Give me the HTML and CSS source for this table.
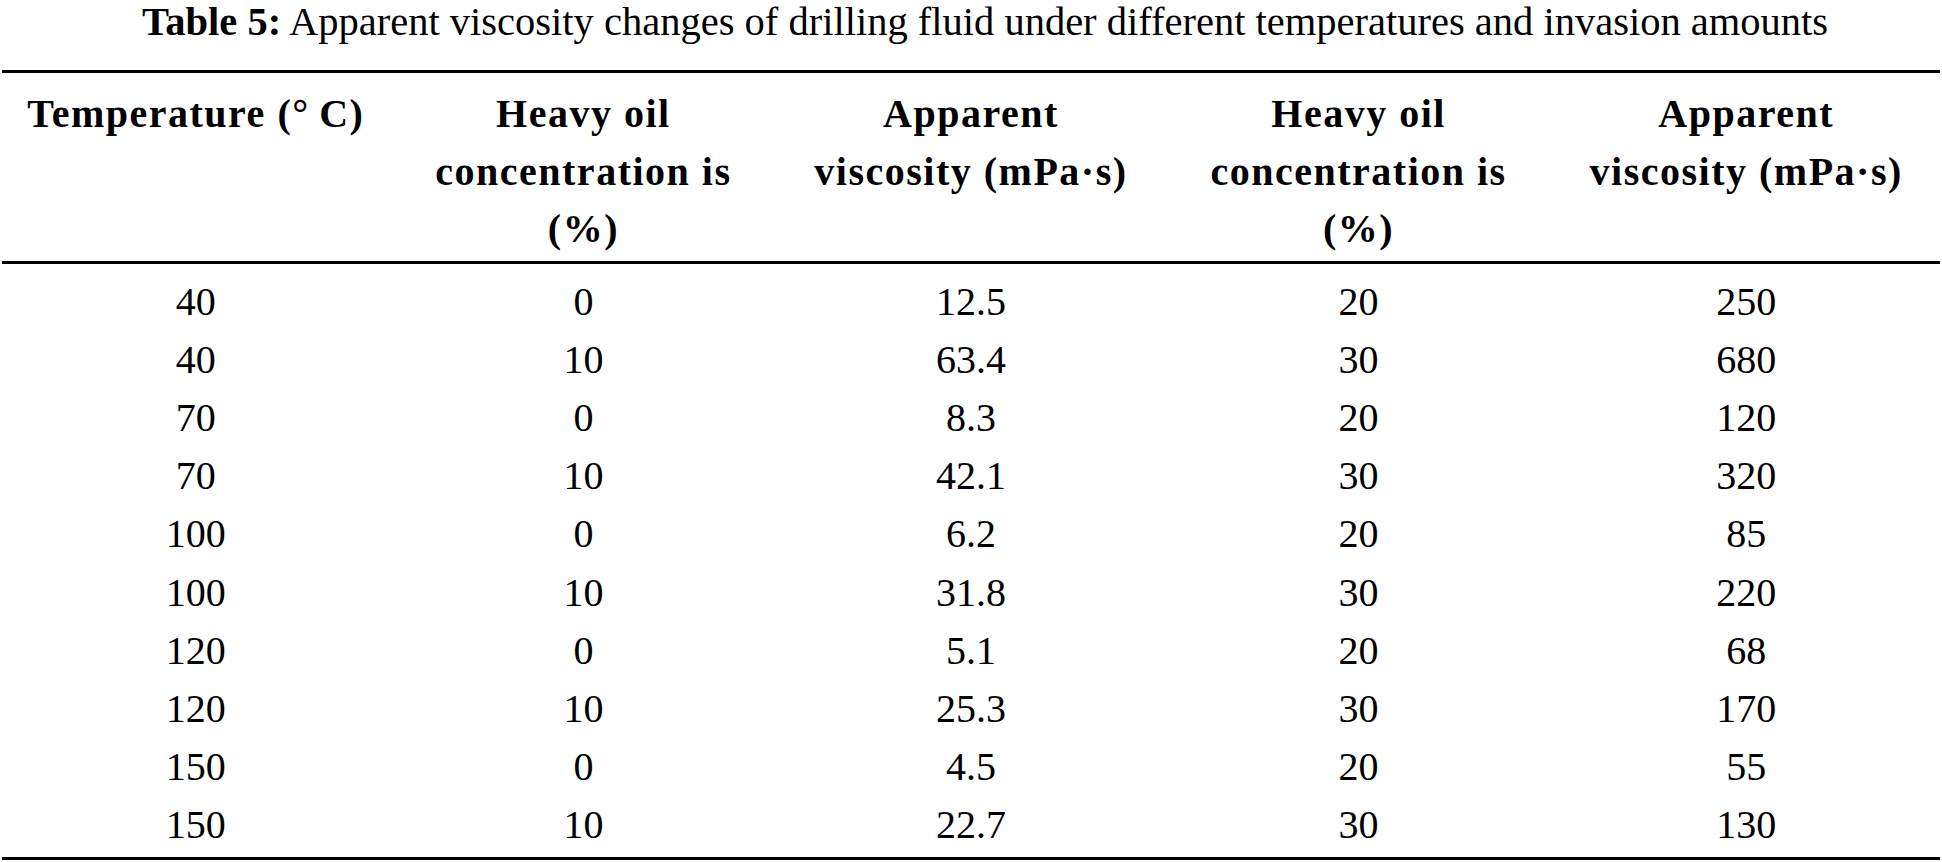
FILE: index.html
```html
<!DOCTYPE html>
<html lang="en">
<head>
<meta charset="utf-8">
<title>Table 5</title>
<link rel="stylesheet" href="styles.css">
</head>
<body>
<div class="wrap">
  <div class="caption"><b>Table 5:</b> Apparent viscosity changes of drilling fluid under different temperatures and invasion amounts</div>
  <table class="data">
    <colgroup><col><col><col><col><col></colgroup>
    <thead>
      <tr>
        <th>Temperature (°&#8201;C)</th>
        <th>Heavy oil<br>concentration is<br>(%)</th>
        <th>Apparent<br>viscosity (mPa·s)</th>
        <th>Heavy oil<br>concentration is<br>(%)</th>
        <th>Apparent<br>viscosity (mPa·s)</th>
      </tr>
    </thead>
    <tbody>
      <tr><td>40</td><td>0</td><td>12.5</td><td>20</td><td>250</td></tr>
      <tr><td>40</td><td>10</td><td>63.4</td><td>30</td><td>680</td></tr>
      <tr><td>70</td><td>0</td><td>8.3</td><td>20</td><td>120</td></tr>
      <tr><td>70</td><td>10</td><td>42.1</td><td>30</td><td>320</td></tr>
      <tr><td>100</td><td>0</td><td>6.2</td><td>20</td><td>85</td></tr>
      <tr><td>100</td><td>10</td><td>31.8</td><td>30</td><td>220</td></tr>
      <tr><td>120</td><td>0</td><td>5.1</td><td>20</td><td>68</td></tr>
      <tr><td>120</td><td>10</td><td>25.3</td><td>30</td><td>170</td></tr>
      <tr><td>150</td><td>0</td><td>4.5</td><td>20</td><td>55</td></tr>
      <tr><td>150</td><td>10</td><td>22.7</td><td>30</td><td>130</td></tr>
    </tbody>
  </table>
</div>
</body>
</html>
```
FILE: styles.css
```css
html, body {
  margin: 0;
  padding: 0;
  background: #ffffff;
}
body {
  font-family: "Liberation Serif", "Times New Roman", serif;
  color: #000000;
}
.wrap {
  padding: 0 2px;
}
.caption {
  height: 70px;
  padding-left: 28px;
  line-height: 44px;
  font-size: 40.5px;
  text-align: center;
}
.data {
  width: 100%;
  border-collapse: collapse;
  table-layout: fixed;
  border-top: 3px solid #000;
  border-bottom: 3px solid #000;
  font-size: 40px;
}
.data th, .data td {
  padding: 0;
  text-align: center;
  vertical-align: top;
}
.data th {
  font-weight: bold;
  letter-spacing: 1.5px;
  line-height: 57.5px;
  padding-top: 12px;
  padding-bottom: 3px;
}
.data thead tr {
  border-bottom: 3px solid #000;
}
.data td {
  line-height: 58.2px;
}
.data tbody tr:first-child td {
  padding-top: 9px;
}
.data tbody tr:last-child td {
  padding-bottom: 2px;
}
```
